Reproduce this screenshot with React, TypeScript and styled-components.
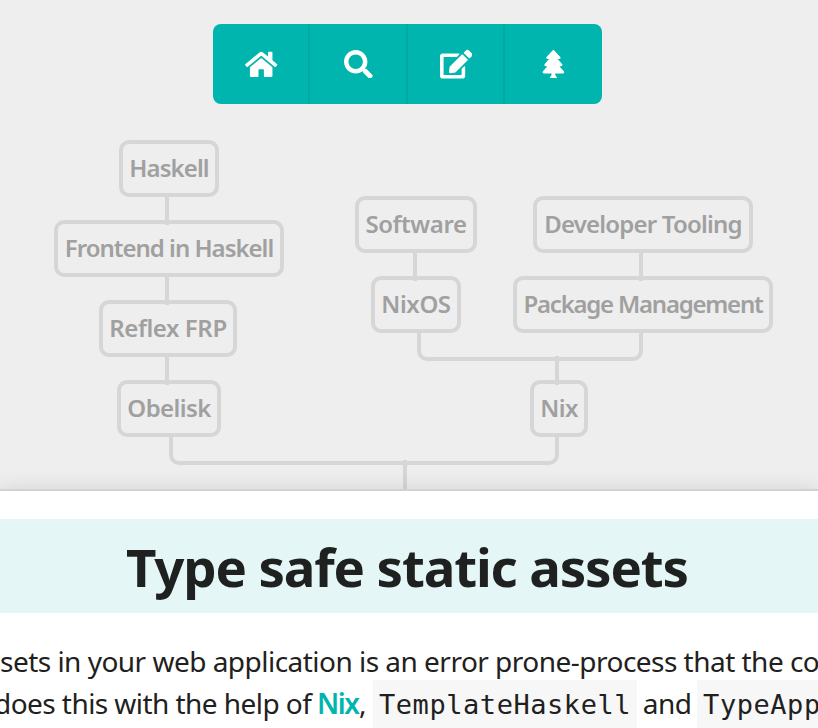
import React from 'react';
import styled, { createGlobalStyle } from 'styled-components';
import { FaSearch, FaEdit, FaTree } from 'react-icons/fa';

const GlobalStyle = createGlobalStyle`
  *, *::before, *::after { box-sizing: border-box; }
  html, body { margin: 0; padding: 0; overflow: hidden; background: #eee; }
`;

const LINE = '#d6d6d6';
const TEAL = '#00b5ad';

const Page = styled.div`
  width: 818px;
  height: 728px;
  overflow: hidden;
  background: #eee;
  color: #1f2120;
  font-family: 'Noto Sans', 'Open Sans', sans-serif;
`;

const Toolbar = styled.nav`
  display: flex;
  width: 389px;
  height: 80px;
  margin: 24px 0 0 213px;
  background: ${TEAL};
  border-radius: 8px;
  overflow: hidden;
`;

const ToolButton = styled.a`
  flex: 1;
  display: flex;
  align-items: center;
  justify-content: center;
  color: #fff;
  font-size: 28.8px;
  box-shadow: inset -2px 0 0 #00a8a1;
  &:last-child { box-shadow: none; }
`;

const Forest = styled.section`
  height: 386px;
  padding-top: 36px;
`;

const Branches = styled.div<{ $gap: number; $left?: number }>`
  display: flex;
  align-items: flex-end;
  gap: ${(p) => p.$gap}px;
  padding-left: ${(p) => p.$left ?? 0}px;
`;

const Subtree = styled.div`
  display: flex;
  flex-direction: column;
`;

const Chain = styled.div<{ $width: number }>`
  display: flex;
  flex-direction: column;
  align-items: center;
  width: ${(p) => p.$width}px;
`;

const Node = styled.a<{ $width: number; $tracking: number; $left?: number; $right?: number }>`
  width: ${(p) => p.$width}px;
  height: 57px;
  margin-left: ${(p) => p.$left ?? 0}px;
  margin-right: ${(p) => p.$right ?? 0}px;
  border: 4px solid ${LINE};
  border-radius: 10px;
  color: #a0a0a0;
  font-size: 24px;
  font-weight: 600;
  line-height: 48px;
  letter-spacing: ${(p) => p.$tracking}px;
  text-align: center;
  white-space: nowrap;
`;

const Stem = styled.div<{ $shift?: number }>`
  width: 4px;
  height: 28px;
  margin: 0 ${(p) => p.$shift ?? 0}px -5px 0;
  background: ${LINE};
`;

const Bracket = styled.div<{ $left: number; $width: number }>`
  width: ${(p) => p.$width}px;
  height: 28px;
  margin-left: ${(p) => p.$left}px;
  border: 4px solid ${LINE};
  border-top: 0;
  border-radius: 0 0 10px 10px;
`;

const Trunk = styled.div<{ $left: number; $height: number }>`
  width: 4px;
  height: ${(p) => p.$height}px;
  margin: -5px 0 -5px ${(p) => p.$left}px;
  background: ${LINE};
`;

const Article = styled.main`
  height: 237px;
  margin-top: 1px;
  padding-top: 28px;
  background: #fff;
  box-shadow: 0 0 0 2px #d2d2d3, 0 0 20px rgba(34, 36, 38, 0.15);
  position: relative;
`;

const Title = styled.h1`
  height: 94px;
  margin: 0;
  padding: 1px 4px 0 0;
  background: #e4f7f6;
  font-size: 52.8px;
  font-weight: 700;
  line-height: 94px;
  letter-spacing: -1.15px;
  text-align: center;
  white-space: nowrap;
`;

const Prose = styled.div`
  padding-top: 27px;
  font-size: 28px;
  line-height: 42px;
  white-space: pre;
`;

const Line = styled.div<{ $left?: number; $tracking: number }>`
  display: flex;
  height: 42px;
  margin-left: ${(p) => p.$left ?? 0}px;
  letter-spacing: ${(p) => p.$tracking}px;

  > * { flex: none; }
`;

const Link = styled.a`
  width: 42px;
  color: ${TEAL};
  font-weight: 600;
  letter-spacing: -1.4px;
`;

const Lead = styled.span`
  width: 323px;
`;

const Comma = styled.span`
  width: 14px;
`;

const Code = styled.code`
  height: 48px;
  margin-top: -2px;
  padding: 0 6px;
  background: #f7f7f7;
  font-family: 'DejaVu Sans Mono', 'Liberation Mono', monospace;
  font-size: 27px;
  line-height: 50px;
  letter-spacing: 0.55px;

  &:last-child { width: 200px; }
`;

const And = styled.span`
  width: 60px;
  text-align: center;
`;

const HomeIcon = () => (
  <svg width="1.125em" height="1em" viewBox="0 0 576 512" fill="currentColor">
    <path d="M488 312.7V456c0 13.3-10.7 24-24 24H348c-6.6 0-12-5.4-12-12V356c0-6.6-5.4-12-12-12h-72c-6.6 0-12 5.4-12 12v112c0 6.6-5.4 12-12 12H112c-13.3 0-24-10.7-24-24V312.7c0-3.6 1.6-7 4.4-9.3l188-154.8c4.4-3.6 10.8-3.6 15.3 0l188 154.8c2.7 2.3 4.3 5.7 4.3 9.3zm83.6-60.9L488 182.9V44.4c0-6.6-5.4-12-12-12h-56c-6.6 0-12 5.4-12 12V117l-89.5-73.7c-17.7-14.6-43.3-14.6-61 0L4.4 251.8c-5.1 4.2-5.8 11.8-1.6 16.9l25.5 31c4.2 5.1 11.8 5.8 16.9 1.6l235.2-193.7c4.4-3.6 10.8-3.6 15.3 0l235.2 193.7c5.1 4.2 12.7 3.5 16.9-1.6l25.5-31c4.2-5.2 3.4-12.7-1.7-16.9z" />
  </svg>
);

export default function App() {
  return (
    <>
      <GlobalStyle />
      <Page>
        <Toolbar>
          <ToolButton><HomeIcon /></ToolButton>
          <ToolButton><FaSearch /></ToolButton>
          <ToolButton><FaEdit size="1.125em" /></ToolButton>
          <ToolButton><FaTree /></ToolButton>
        </Toolbar>

        <Forest>
          <Branches $gap={71} $left={54}>
            <Chain $width={230}>
              <Node $width={100} $tracking={-0.9}>Haskell</Node>
              <Stem $shift={4} />
              <Node $width={230} $tracking={-1}>Frontend in Haskell</Node>
              <Stem $shift={4} />
              <Node $width={138} $tracking={-0.4} $right={2}>Reflex FRP</Node>
              <Stem $shift={4} />
              <Node $width={104} $tracking={-0.6}>Obelisk</Node>
            </Chain>
            <Subtree>
              <Branches $gap={36}>
                <Chain $width={122}>
                  <Node $width={122} $tracking={-0.45}>Software</Node>
                  <Stem $shift={2} />
                  <Node $width={90} $tracking={-0.4}>NixOS</Node>
                </Chain>
                <Chain $width={260}>
                  <Node $width={220} $tracking={-0.8}>Developer Tooling</Node>
                  <Stem $shift={4} />
                  <Node $width={260} $tracking={-1.23}>Package Management</Node>
                </Chain>
              </Branches>
              <Bracket $left={62} $width={226} />
              <Trunk $left={200} $height={29} />
              <Node $width={58} $tracking={-0.6} $left={175}>Nix</Node>
            </Subtree>
          </Branches>
          <Bracket $left={169} $width={390} />
          <Trunk $left={403} $height={30} />
        </Forest>

        <Article>
          <Title>Type safe static assets</Title>
          <Prose>
            <Line $tracking={-0.52}>sets in your web application is an error prone-process that the co</Line>
            <Line $left={-6} $tracking={-0.56}>
              <Lead>does this with the help of </Lead>
              <Link>Nix</Link>
              <Comma>,</Comma>
              <Code>TemplateHaskell</Code>
              <And>and</And>
              <Code>TypeApp</Code>
            </Line>
          </Prose>
        </Article>
      </Page>
    </>
  );
}
